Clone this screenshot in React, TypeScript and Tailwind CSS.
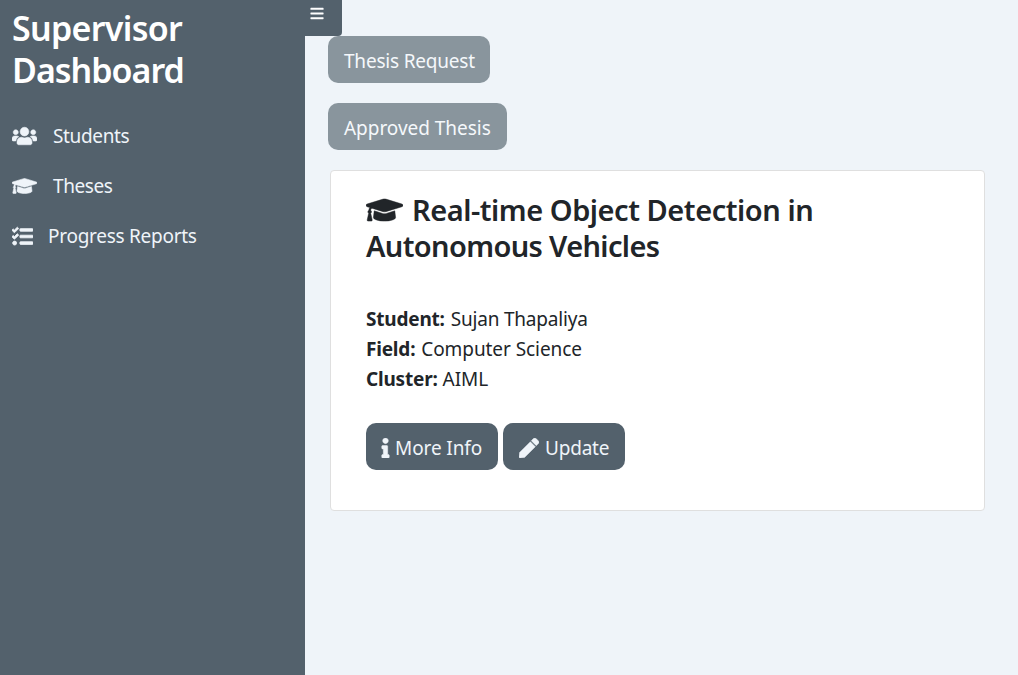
import React from "react";
import { FaUsers, FaGraduationCap, FaTasks, FaInfo, FaPen, FaBars } from "react-icons/fa";

function Sidebar() {
  return (
    <aside className="h-full w-[305px] shrink-0 bg-[#53616c] pl-3 text-[#eff4f9]">
      <h1 className="pt-[7px] text-[34px] leading-[42px] font-semibold text-white">
        <span className="block tracking-[-0.7px]">Supervisor</span>
        <span className="block tracking-[-1px]">Dashboard</span>
      </h1>
      <nav className="mt-5 flex flex-col text-[19px] whitespace-nowrap">
        <a className="flex h-[50px] items-center gap-[15px]">
          <FaUsers className="h-5 w-[25px] stroke-current [stroke-width:14]" />
          <span className="pl-px tracking-[-0.35px]">Students</span>
        </a>
        <a className="flex h-[50px] items-center gap-[15px]">
          <FaGraduationCap className="h-5 w-[25px] stroke-current [stroke-width:14]" />
          <span className="pl-px tracking-[-0.4px]">Theses</span>
        </a>
        <a className="flex h-[50px] items-center gap-[15px]">
          <FaTasks className="h-[21px] w-[21px] stroke-current [stroke-width:20]" />
          <span className="tracking-[-0.27px]">Progress Reports</span>
        </a>
      </nav>
    </aside>
  );
}

function ThesisCard() {
  return (
    <article className="mt-5 ml-0.5 h-[341px] w-[655px] rounded border border-[#dfdfdf] bg-white pt-[21px] pl-[35px] text-[#212529]">
      <h2 className="text-[29px] leading-9 font-semibold whitespace-nowrap">
        <span className="flex items-center">
          <FaGraduationCap className="mr-[9px] h-[30px] w-[37px] stroke-current [stroke-width:8]" />
          <span className="tracking-[-0.46px]">Real-time Object Detection in</span>
        </span>
        <span className="block tracking-[-0.64px]">Autonomous Vehicles</span>
      </h2>
      <div className="mt-10 text-[19px] leading-[30px] whitespace-nowrap">
        <p><b className="tracking-[-0.2px]">Student:</b> <span className="ml-px tracking-[-0.2px]">Sujan Thapaliya</span></p>
        <p><b className="tracking-[-0.2px]">Field:</b> <span className="ml-px tracking-[-0.07px]">Computer Science</span></p>
        <p><b className="tracking-[-0.2px]">Cluster:</b> AIML</p>
      </div>
      <div className="mt-[29px] flex gap-[5px] text-[19px] whitespace-nowrap text-[#eff4f9]">
        <button className="flex h-[47px] w-[132px] items-center rounded-[10px] bg-[#53616c] pt-[3px] pl-[15px]">
          <FaInfo className="mr-[5px] h-5 w-[9px] stroke-current [stroke-width:12]" />
          <span className="tracking-[-0.1px]">More Info</span>
        </button>
        <button className="flex h-[47px] w-[122px] items-center rounded-[10px] bg-[#53616c] pt-[3px] pl-4">
          <FaPen className="mr-[6px] h-5 w-5 stroke-current [stroke-width:10]" />
          <span className="tracking-[-0.2px]">Update</span>
        </button>
      </div>
    </article>
  );
}

export default function App() {
  return (
    <div className="flex h-screen w-full overflow-hidden bg-[#eff4f9] font-['Noto_Sans','Open_Sans',sans-serif]">
      <Sidebar />
      <main className="min-w-0 flex-1">
        <button className="flex h-9 w-[37px] rounded-br bg-[#53616c] pt-[6px] pl-[5px] text-white">
          <FaBars className="h-[15px] w-[14px]" />
        </button>
        <div className="flex flex-col items-start pl-[23px]">
          <button className="mb-5 h-[47px] w-[162px] rounded-[10px] bg-[#89959d] pt-[3px] pl-4 text-left text-[19px] whitespace-nowrap text-[#f5f8fb]">
            <span className="tracking-[-0.2px]">Thesis Request</span>
          </button>
          <button className="h-[47px] w-[179px] rounded-[10px] bg-[#89959d] pt-[3px] pl-4 text-left text-[19px] whitespace-nowrap text-[#f5f8fb]">
            <span className="tracking-[-0.03px]">Approved Thesis</span>
          </button>
          <ThesisCard />
        </div>
      </main>
    </div>
  );
}
